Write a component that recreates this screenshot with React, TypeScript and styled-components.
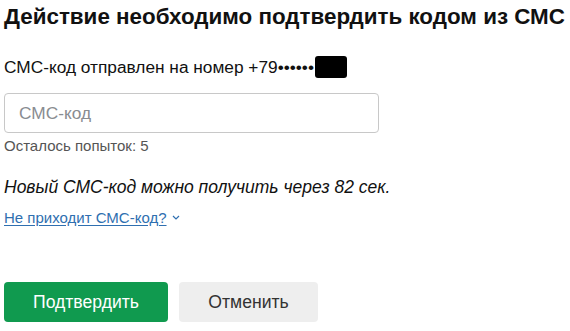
import React from "react";
import styled, { createGlobalStyle } from "styled-components";

const Global = createGlobalStyle`
  html, body { margin: 0; padding: 0; background: #fff; }
  body { font-family: "Liberation Sans", Arial, sans-serif; color: #111; }
`;

const Page = styled.div`
  padding: 3px 4px 0 4px;
  display: flex;
  flex-direction: column;
`;

const Title = styled.h1`
  margin: 0;
  font-size: 22.4px;
  line-height: 28px;
  font-weight: 700;
  color: #111;
  white-space: nowrap;
`;

const SentLine = styled.div`
  margin-top: 25px;
  font-size: 17.3px;
  line-height: 22px;
  display: flex;
  align-items: center;
`;

const Masked = styled.span`
  display: inline-block;
  width: 32px;
  height: 22px;
  background: #000;
  border-radius: 3px;
  margin-left: 1px;
`;

const Input = styled.input`
  margin-top: 15px;
  box-sizing: border-box;
  width: 375px;
  height: 40px;
  border: 1px solid #c8c8c8;
  border-radius: 4px;
  padding: 0 14px;
  font-family: inherit;
  font-size: 17.3px;
  color: #111;
  outline: none;
  &::placeholder { color: #898c91; }
`;

const Hint = styled.div`
  margin-top: 4px;
  font-size: 15px;
  line-height: 17px;
  color: #555;
`;

const Timer = styled.div`
  margin-top: 23px;
  font-size: 17.5px;
  line-height: 20px;
  font-style: italic;
  color: #111;
`;

const HelpLink = styled.a`
  margin-top: 12px;
  font-size: 15px;
  line-height: 17px;
  color: #2f6fb0;
  text-decoration: underline;
  text-underline-offset: 2px;
  display: inline-flex;
  align-items: center;
  gap: 5px;
  align-self: flex-start;
  cursor: pointer;
`;

const Actions = styled.div`
  margin-top: 56px;
  display: flex;
  gap: 11px;
`;

const Button = styled.button<{ $primary?: boolean }>`
  height: 40px;
  border: none;
  border-radius: 4px;
  font-family: inherit;
  font-size: 17.6px;
  cursor: pointer;
  width: ${(p) => (p.$primary ? "164px" : "139px")};
  background: ${(p) => (p.$primary ? "#109a4f" : "#eeeeee")};
  color: ${(p) => (p.$primary ? "#fff" : "#333")};
`;

export default function App() {
  return (
    <>
      <Global />
      <Page>
        <Title>Действие необходимо подтвердить кодом из СМС</Title>
        <SentLine>
          СМС-код отправлен на номер +79••••••
          <Masked />
        </SentLine>
        <Input placeholder="СМС-код" />
        <Hint>Осталось попыток: 5</Hint>
        <Timer>Новый СМС-код можно получить через 82 сек.</Timer>
        <HelpLink>
          Не приходит СМС-код?
          <svg width="8" height="5" viewBox="0 0 8 5" fill="none">
            <path d="M1 1 L4 4 L7 1" stroke="#2f6fb0" strokeWidth="1.2" />
          </svg>
        </HelpLink>
        <Actions>
          <Button $primary>Подтвердить</Button>
          <Button>Отменить</Button>
        </Actions>
      </Page>
    </>
  );
}
